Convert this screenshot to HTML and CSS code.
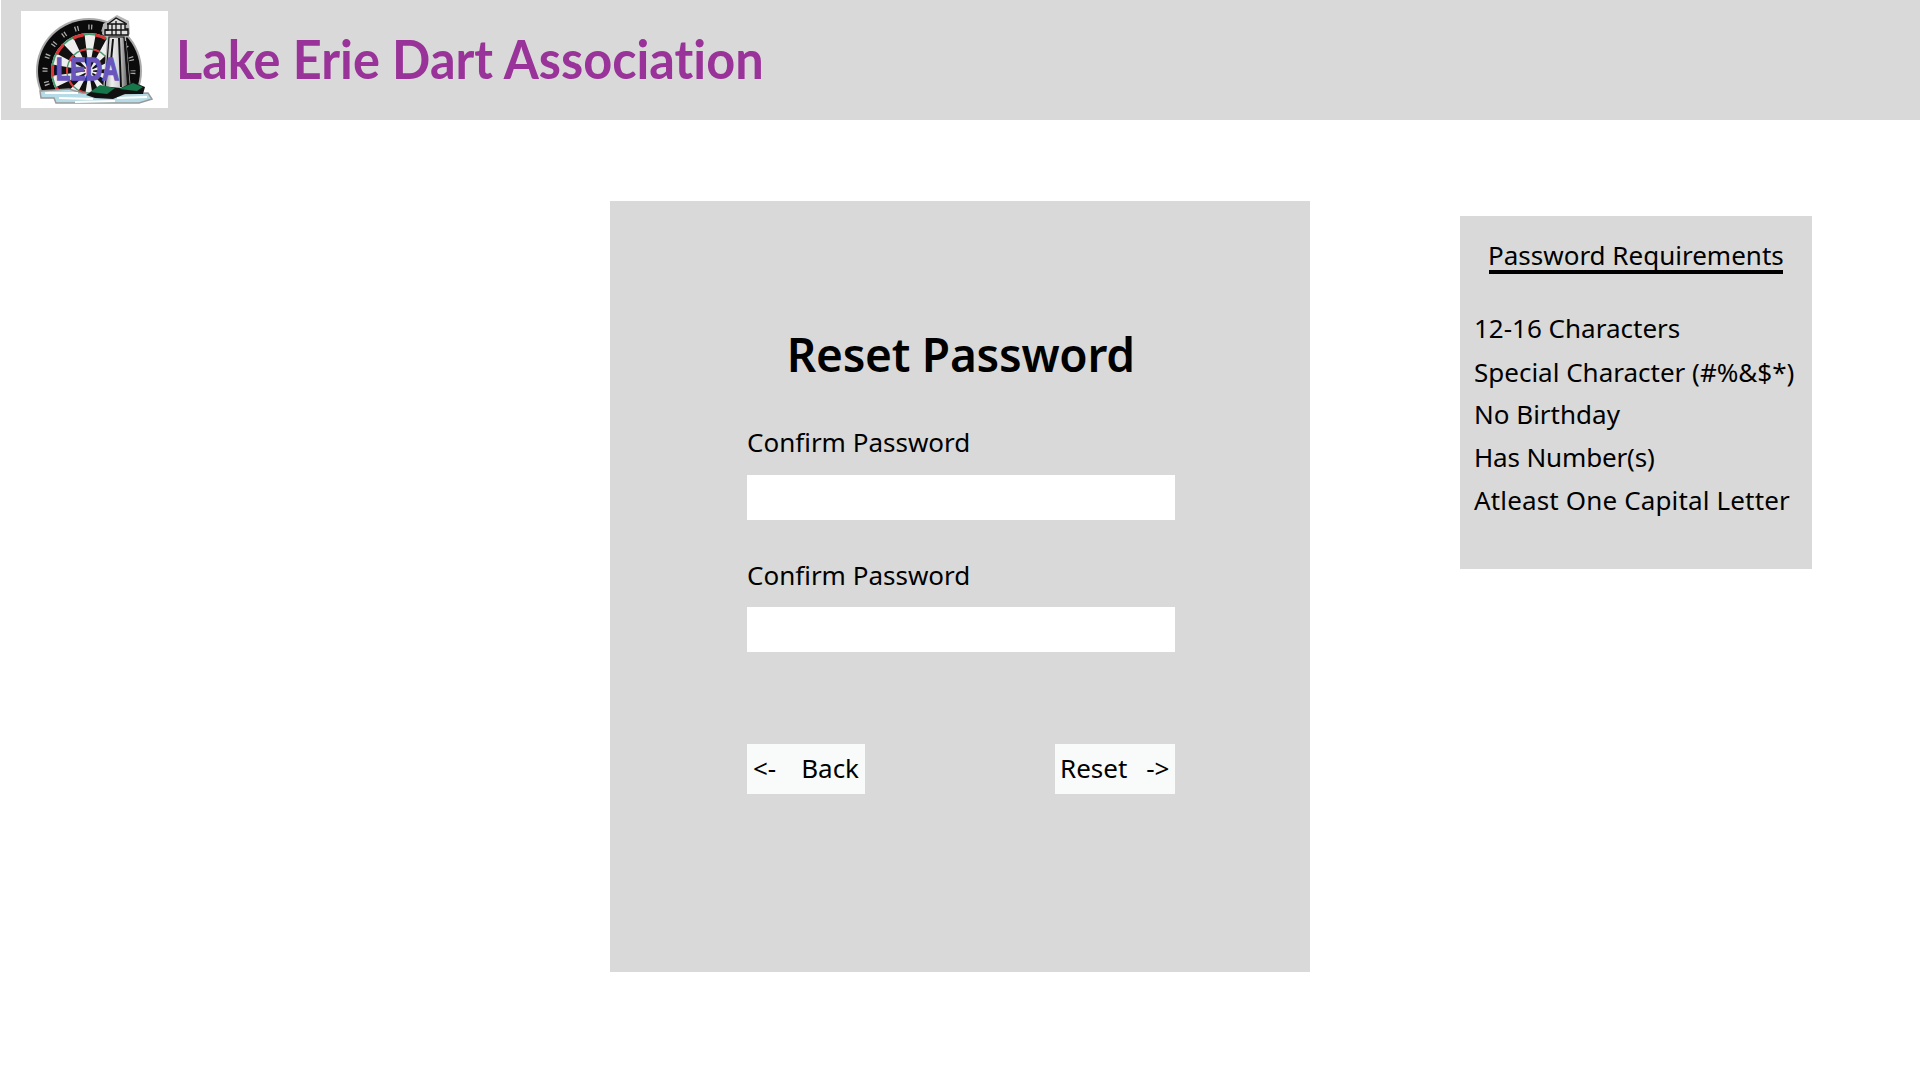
FILE: index.html
```html
<!DOCTYPE html>
<html lang="en">
<head>
<meta charset="utf-8">
<title>Reset Password</title>
<link rel="stylesheet" href="styles.css">
</head>
<body>
<header class="header">
  <svg class="logo" viewBox="0 0 147 97" role="img" aria-label="LEDA">
    <defs>
      <clipPath id="arch"><path d="M0 0H147V74L120 84H16Z"/></clipPath>
      <linearGradient id="tower"><stop offset="0" stop-color="#999"/><stop offset=".3" stop-color="#eee"/><stop offset=".65" stop-color="#ccc"/><stop offset="1" stop-color="#555"/></linearGradient>
    </defs>
    <rect width="147" height="97" fill="#fff"/>
    <g clip-path="url(#arch)">
      <circle cx="68" cy="60" r="53" fill="#aaa"/>
      <circle cx="68" cy="60" r="51" fill="#0b0b0b"/>
      <circle cx="68" cy="60" r="44" fill="none" stroke="#aaa" stroke-width="5" stroke-dasharray="1.3 1.5 1.3 9.72" stroke-dashoffset="1"/>
      <circle cx="68" cy="60" r="38" fill="#eee"/>
      <circle cx="68" cy="60" r="18.5" fill="none" stroke="#111" stroke-width="37" stroke-dasharray="5.812" stroke-dashoffset="2.9"/>
      <circle cx="68" cy="60" r="37" fill="none" stroke="#4b9b73" stroke-width="2"/>
      <circle cx="68" cy="60" r="36.5" fill="none" stroke="#dc3538" stroke-width="3" stroke-dasharray="11.467" stroke-dashoffset="5.7"/>
      <circle cx="68" cy="60" r="22" fill="none" stroke="#4b9b73" stroke-width="1.5"/>
      <circle cx="68" cy="60" r="22" fill="none" stroke="#dc3538" stroke-width="2" stroke-dasharray="6.912" stroke-dashoffset="3.4"/>
      <circle cx="68" cy="60" r="4" fill="#eee"/>
    </g>
    <path d="M82 13L96 4L108 10L109 23L105 27L110 79H82L86 27L81 23Z" fill="#b5b5b5"/>
    <path d="M88 26H103L107 78H84Z" fill="url(#tower)" stroke="#111" stroke-width="1.2"/>
    <path d="M98 27L100 76M92 28L90 50M104 30L108 77" stroke="#111" stroke-width="2" fill="none"/>
    <path d="M84 24V19H87V13L95 7L104 12V18H107V24Z" fill="#ddd" stroke="#111" stroke-width="1.4"/>
    <path d="M86 13H106M84 19H107M91 13V24M95 10V24M100 13V24" stroke="#111" stroke-width="1.3"/>
    <path d="M19 80L48 78L61 82L92 83L127 82L131 88L118 92H35L33 87H20Z" fill="#b5dce6" stroke="#999" stroke-width="1.5"/>
    <path d="M24 82H57M38 87L72 88M96 87L126 86M54 91L94 90" stroke="#fff" stroke-width="2"/>
    <path d="M65 84L79 75L100 77L112 71L124 76L122 83L104 83L92 88L74 87Z" fill="#111"/>
    <path d="M69 81L79 74L94 77L86 83ZM98 78L112 72L122 76L116 80Z" fill="#16774b"/>
    <text class="logo-text" x="35" y="69" textLength="63" lengthAdjust="spacingAndGlyphs">LEDA</text>
  </svg>
  <h1 class="brand">Lake Erie Dart Association</h1>
</header>
<main class="content">
  <form class="panel">
    <h2 class="heading">Reset Password</h2>
    <label class="label" for="password">Confirm Password</label>
    <input class="field" id="password" type="password">
    <label class="label" for="confirm">Confirm Password</label>
    <input class="field" id="confirm" type="password">
    <div class="actions">
      <button class="button back" type="button"><span class="arrow">&lt;-</span><span>Back</span></button>
      <button class="button reset" type="button"><span>Reset</span><span class="arrow">-&gt;</span></button>
    </div>
  </form>
  <aside class="rules">
    <h3 class="rules-title">Password Requirements</h3>
    <ul class="rules-list">
      <li>12-16 Characters</li>
      <li class="special">Special Character (#%&amp;$*)</li>
      <li>No Birthday</li>
      <li class="number">Has Number(s)</li>
      <li class="capital">Atleast One Capital Letter</li>
    </ul>
  </aside>
</main>
</body>
</html>
```
FILE: styles.css
```css
* { box-sizing: border-box; }
body { margin: 0; height: 1080px; overflow: hidden; background: #fff; color: #000; font: 400 26px/36px "Noto Sans", sans-serif; }
h1, h2, h3, ul { margin: 0; padding: 0; font-weight: 400; }
.header { display: flex; align-items: center; height: 120px; margin-left: 1px; padding: 0 0 1px 20px; background: #d9d9d9; }
.logo { display: block; flex: none; width: 147px; height: 97px; }
.logo-text { font: 700 31px "Liberation Sans", sans-serif; fill: #6956bd; stroke: #6956bd; stroke-width: 1.6px; }
.brand { margin: -2px 0 0 7.5px; color: #993399; font: 700 54px/70px Lato, sans-serif; font-variant-ligatures: none; transform: scaleX(.935); transform-origin: 0 50%; white-space: nowrap; }
.content { display: flex; align-items: flex-start; padding: 81px 108px 0 610px; }
.panel { display: flex; flex-direction: column; width: 700px; height: 771px; padding: 120px 135.5px 0 137px; background: #d9d9d9; }
.heading { margin-bottom: 37px; text-align: center; font-size: 46px; line-height: 66px; font-weight: 600; letter-spacing: -.25px; white-space: nowrap; }
.label { height: 37px; margin-bottom: 13.5px; line-height: 36px; white-space: nowrap; }
.field { width: 100%; height: 45px; margin-bottom: 37px; padding: 0 10px; border: 0; border-radius: 0; background: #fff; font: inherit; }
.actions { display: flex; justify-content: space-between; margin-top: 54.5px; }
.button { display: flex; align-items: center; justify-content: space-between; height: 50px; padding: 0 6px 1px; border: 0; background: #f9fbfa; color: #000; font: inherit; }
.back { width: 118px; }
.reset { width: 119.5px; padding-right: 5px; padding-left: 5px; }
.rules { width: 352px; height: 353px; margin: 15px 0 0 150px; padding: 20px 14px 0; background: #d9d9d9; }
.rules-title { width: 294px; height: 38px; margin: 0 auto 33px; border-bottom: 4px solid #000; font-size: 26px; line-height: 38px; text-indent: -1px; white-space: nowrap; }
.rules-list { list-style: none; line-height: 43px; white-space: nowrap; }
.special { padding-top: 1px; margin-bottom: -1px; }
.number { letter-spacing: -.15px; }
.capital { letter-spacing: .15px; }
```
